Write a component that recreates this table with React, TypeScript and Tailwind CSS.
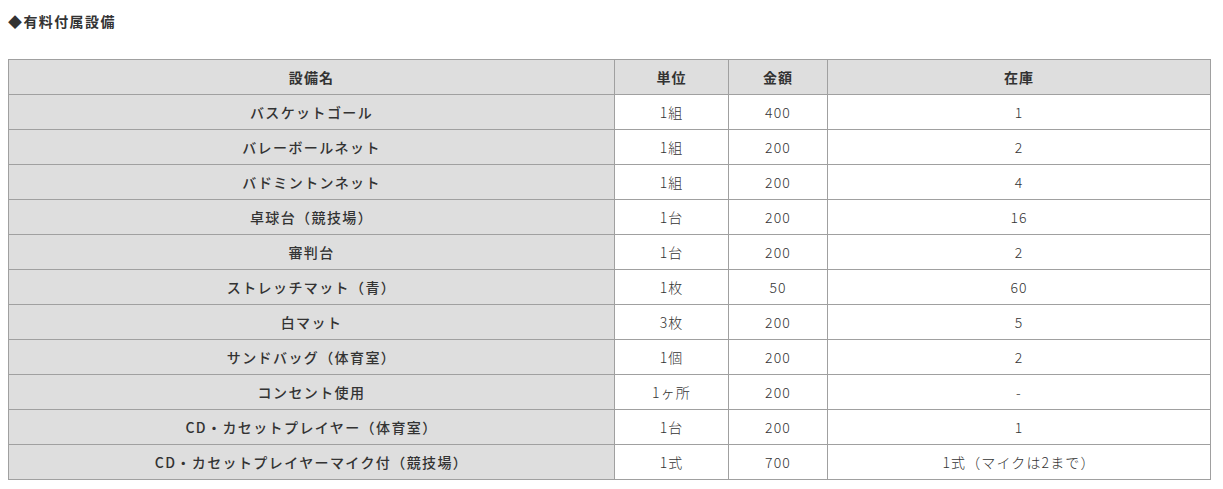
import React from 'react'

const rows: [string, string, string, string][] = [
  ['バスケットゴール', '1組', '400', '1'],
  ['バレーボールネット', '1組', '200', '2'],
  ['バドミントンネット', '1組', '200', '4'],
  ['卓球台（競技場）', '1台', '200', '16'],
  ['審判台', '1台', '200', '2'],
  ['ストレッチマット（青）', '1枚', '50', '60'],
  ['白マット', '3枚', '200', '5'],
  ['サンドバッグ（体育室）', '1個', '200', '2'],
  ['コンセント使用', '1ヶ所', '200', '-'],
  ['CD・カセットプレイヤー（体育室）', '1台', '200', '1'],
  ['CD・カセットプレイヤーマイク付（競技場）', '1式', '700', '1式（マイクは2まで）'],
]

const App = () => {
  return (
    <div
      className="bg-white px-2 pt-[11px] text-[#333]"
      style={{ fontFamily: '"Noto Sans CJK JP", "Noto Sans", sans-serif' }}
    >
      <h3 className="text-[14px] leading-[20px] font-bold tracking-[0.1em]">◆有料付属設備</h3>

      <table className="mt-[28px] w-[1203px] table-fixed border-collapse text-[14px] tracking-[0.08em]">
        <colgroup>
          <col className="w-[606px]" />
          <col className="w-[114px]" />
          <col className="w-[99px]" />
          <col />
        </colgroup>
        {/* Header */}
        <thead>
          <tr className="h-[35px] bg-[#dedede]">
            <th className="border border-[#a0a0a0] font-bold">設備名</th>
            <th className="border border-[#a0a0a0] font-bold">単位</th>
            <th className="border border-[#a0a0a0] font-bold">金額</th>
            <th className="border border-[#a0a0a0] font-bold">在庫</th>
          </tr>
        </thead>
        <tbody>
          {rows.map((r, i) => (
            <tr key={i} className="h-[35px]">
              <th className="border border-[#a0a0a0] bg-[#dedede] font-medium tracking-[0.1em]">{r[0]}</th>
              <td className="border border-[#a0a0a0] text-center font-light">{r[1]}</td>
              <td className="border border-[#a0a0a0] text-center font-light">{r[2]}</td>
              <td className="border border-[#a0a0a0] text-center font-light">{r[3]}</td>
            </tr>
          ))}
        </tbody>
      </table>
    </div>
  )
}

export default App
